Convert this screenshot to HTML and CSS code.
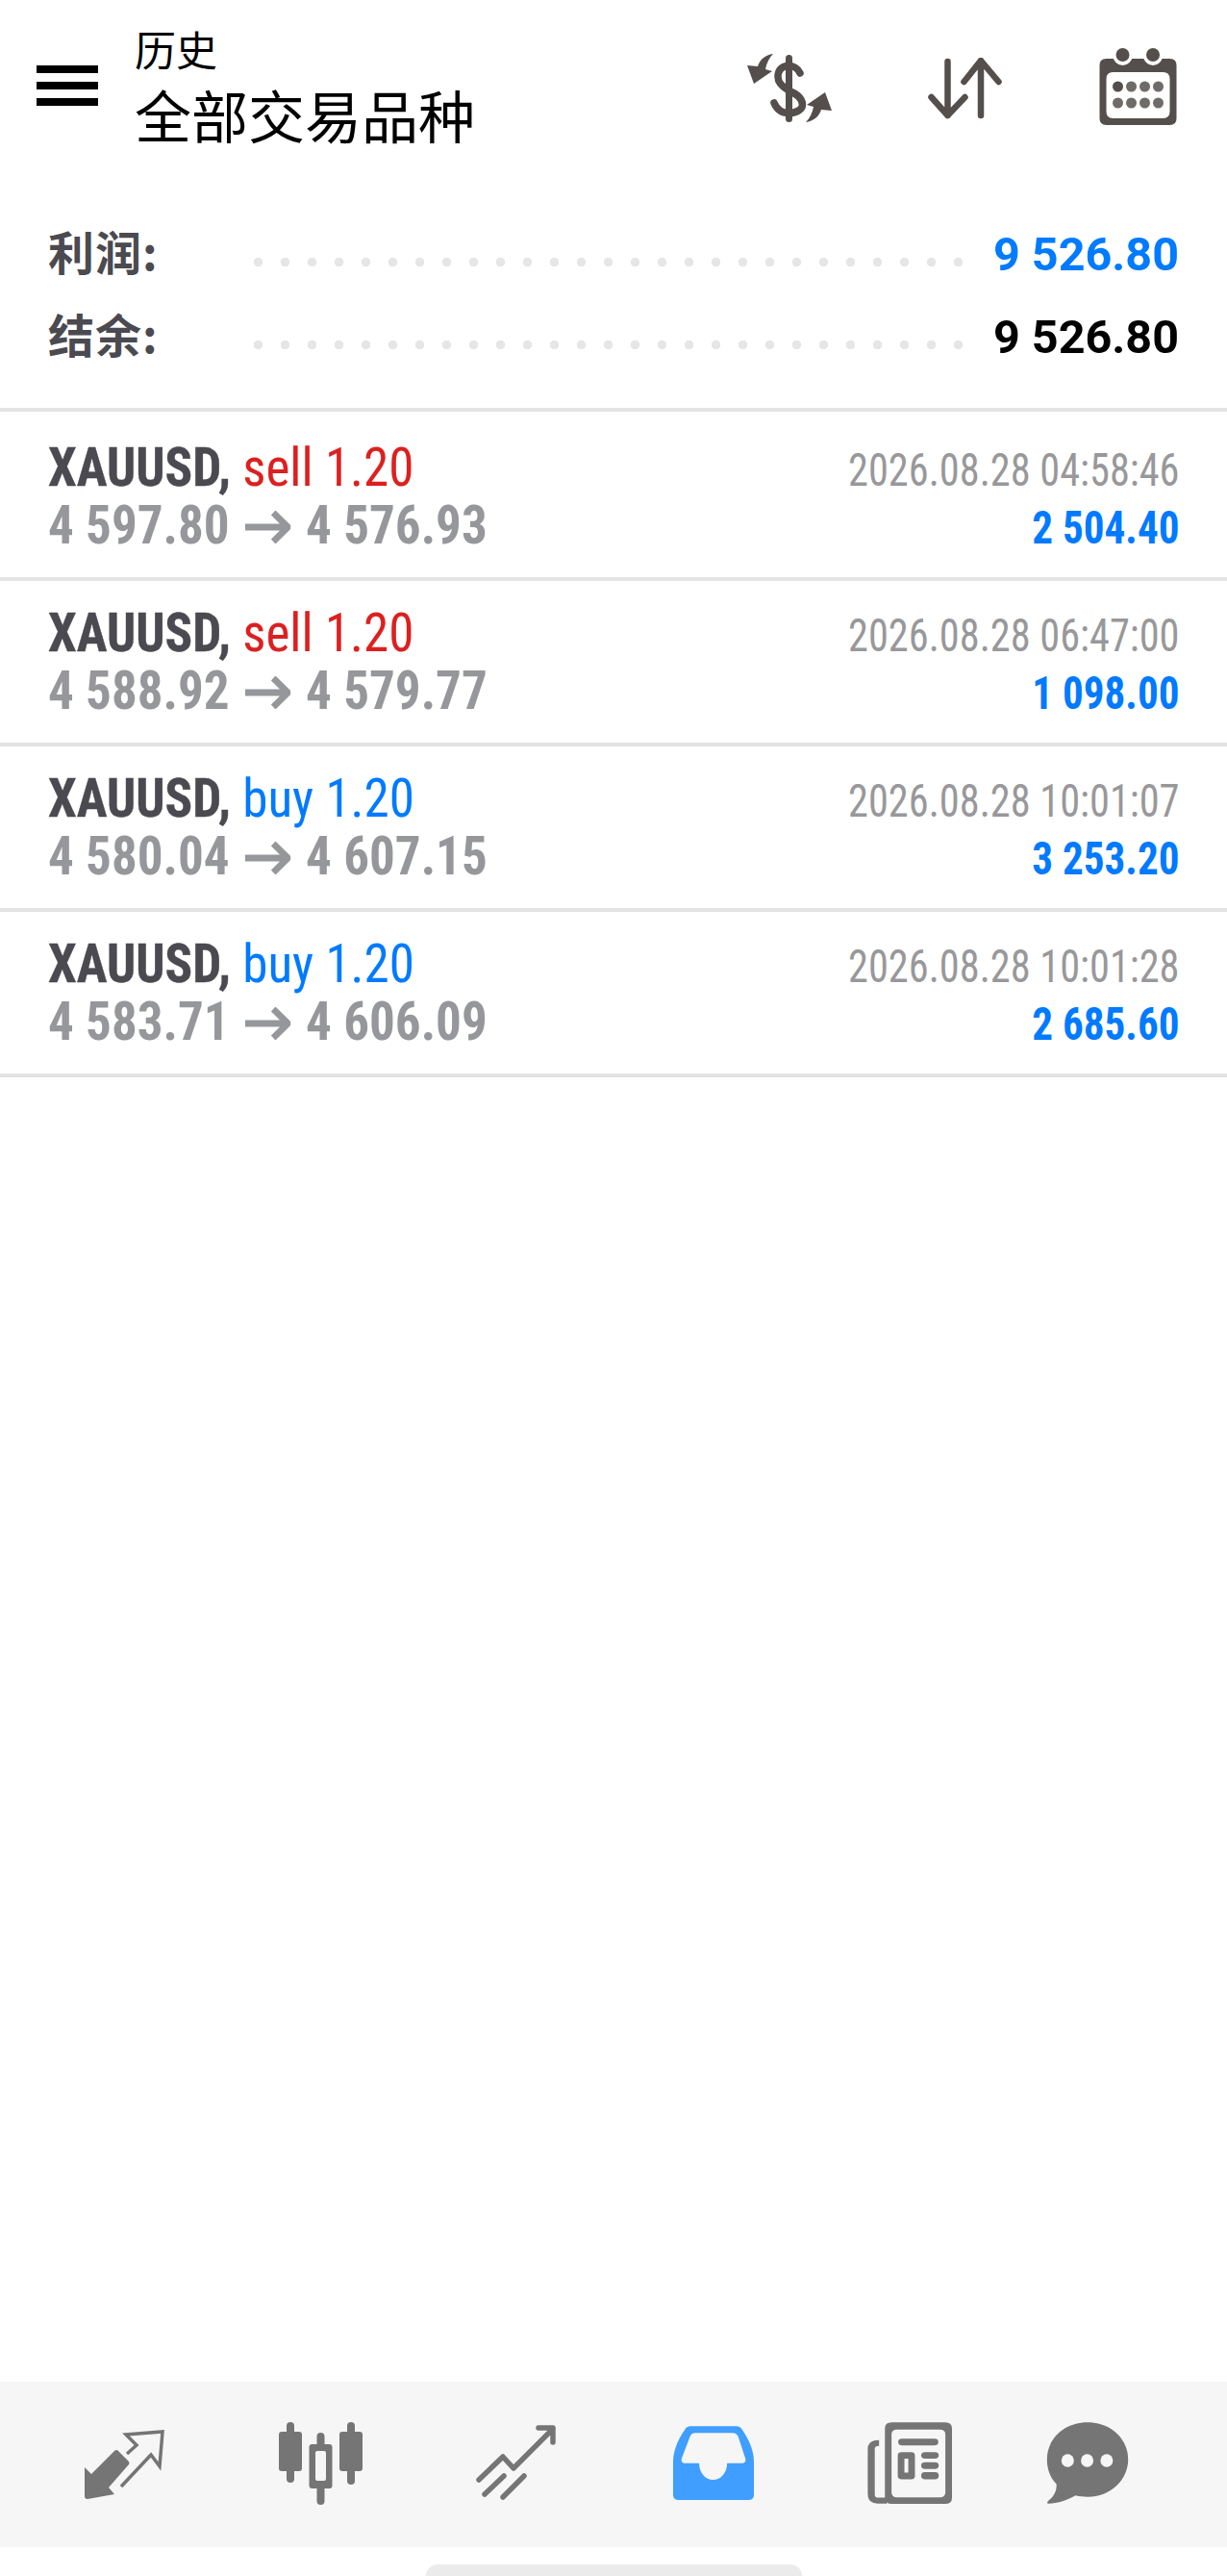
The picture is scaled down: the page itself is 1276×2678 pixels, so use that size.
FILE: index.html
```html
<!DOCTYPE html>
<html lang="zh">
<head>
<meta charset="UTF-8" />
<meta name="viewport" content="width=device-width, initial-scale=1" />
<title>历史</title>
<link rel="stylesheet" href="styles.css">
</head>
<body>

<div class="page">

  <header class="topbar">
    <div class="burger"><span></span><span></span><span></span></div>
    <div class="titles">
      <div class="title-small">历史</div>
      <div class="title-big">全部交易品种</div>
    </div>
    <!-- dollar swap -->
    <svg class="ico-dollar" viewBox="0 0 100 90">
      <path d="M34 11C26 12 20 17 18 24L7 23L14 42L33 29L26 27C27 21 30 15 34 11Z" fill="#544e4c"/>
      <path d="M68 82C76 81 82 76 84 69L95 70L88 51L69 64L76 66C75 72 72 78 68 82Z" fill="#544e4c"/>
      <path d="M62 31C60 26 55 23.500 50 23.500C42 23.500 39 29 39 35C39 42 45 46 50 49C57 52 64.500 56 64.500 64C64.500 69 58 72.500 50 72.500C43 72.500 38 69 35 62" fill="none" stroke="#544e4c" stroke-width="7.500" stroke-linecap="round"/>
      <rect x="47" y="12" width="7" height="70" rx="3.500" fill="#544e4c"/>
    </svg>
    <!-- sort -->
    <svg class="ico-sort" viewBox="0 0 77 64">
      <path d="M20.500 4V60M3.500 41L20.500 60L38.500 41M55 60V3M37.500 25L55 3L73.500 25" fill="none" stroke="#544e4c" stroke-width="6.500" stroke-linecap="round" stroke-linejoin="round"/>
    </svg>
    <!-- calendar -->
    <svg class="ico-calendar" viewBox="0 0 80 80">
      <path fill-rule="evenodd" d="M7 11H73Q80 11 80 18V73Q80 80 73 80H7Q0 80 0 73V18Q0 11 7 11ZM14 25Q7 25 7 32V66Q7 73 14 73H66Q73 73 73 66V32Q73 25 66 25Z" fill="#544e4c"/>
      <circle cx="24" cy="8" r="10" fill="#fff"/>
      <circle cx="55.500" cy="8" r="10" fill="#fff"/>
      <circle cx="24" cy="7" r="7" fill="#544e4c"/>
      <circle cx="55.500" cy="7" r="7" fill="#544e4c"/>
      <g fill="#6f6b69">
        <circle cx="19" cy="40" r="5.500" fill="#544e4c"/><circle cx="33" cy="40" r="5.500"/><circle cx="47" cy="40" r="5.500"/><circle cx="61" cy="40" r="5.500"/>
        <circle cx="19" cy="57" r="5.500"/><circle cx="33" cy="57" r="5.500"/><circle cx="47" cy="57" r="5.500"/><circle cx="61" cy="57" r="5.500"/>
      </g>
    </svg>
  </header>

  <section class="summary">
    <div class="sum-row">
      <span class="sum-label">利润:</span>
      <span class="dots"></span>
      <span class="sum-value blue">9 526.80</span>
    </div>
    <div class="sum-row">
      <span class="sum-label">结余:</span>
      <span class="dots"></span>
      <span class="sum-value">9 526.80</span>
    </div>
  </section>

  <main class="deals">
    <div class="deal">
      <div class="deal-left">
        <div class="deal-head"><b>XAUUSD,</b> <span class="red">sell 1.20</span></div>
        <div class="deal-price">4 597.80 <svg class="to" viewBox="0 0 50 34"><path d="M0 17H46M31 2L47 17L31 32" fill="none" stroke="#96979a" stroke-width="7"/></svg> 4 576.93</div>
      </div>
      <div class="deal-right">
        <div class="deal-time">2026.08.28 04:58:46</div>
        <div class="deal-profit">2 504.40</div>
      </div>
    </div>
    <div class="deal">
      <div class="deal-left">
        <div class="deal-head"><b>XAUUSD,</b> <span class="red">sell 1.20</span></div>
        <div class="deal-price">4 588.92 <svg class="to" viewBox="0 0 50 34"><path d="M0 17H46M31 2L47 17L31 32" fill="none" stroke="#96979a" stroke-width="7"/></svg> 4 579.77</div>
      </div>
      <div class="deal-right">
        <div class="deal-time">2026.08.28 06:47:00</div>
        <div class="deal-profit">1 098.00</div>
      </div>
    </div>
    <div class="deal">
      <div class="deal-left">
        <div class="deal-head"><b>XAUUSD,</b> <span class="blue">buy 1.20</span></div>
        <div class="deal-price">4 580.04 <svg class="to" viewBox="0 0 50 34"><path d="M0 17H46M31 2L47 17L31 32" fill="none" stroke="#96979a" stroke-width="7"/></svg> 4 607.15</div>
      </div>
      <div class="deal-right">
        <div class="deal-time">2026.08.28 10:01:07</div>
        <div class="deal-profit">3 253.20</div>
      </div>
    </div>
    <div class="deal">
      <div class="deal-left">
        <div class="deal-head"><b>XAUUSD,</b> <span class="blue">buy 1.20</span></div>
        <div class="deal-price">4 583.71 <svg class="to" viewBox="0 0 50 34"><path d="M0 17H46M31 2L47 17L31 32" fill="none" stroke="#96979a" stroke-width="7"/></svg> 4 606.09</div>
      </div>
      <div class="deal-right">
        <div class="deal-time">2026.08.28 10:01:28</div>
        <div class="deal-profit">2 685.60</div>
      </div>
    </div>
  </main>

  <nav class="tabs">
    <div class="tab">
      <svg class="ico-tab" viewBox="0 0 100 90">
        <path d="M8 50L15 57L39 33Q41 31 43 33L54 44Q55 46 54 47L33 71L39 78L11 83Q8 83 8 80Z" fill="#757575"/>
        <path d="M46 70L77 37L86 49L89 13L51 16L62 27L52 36" fill="none" stroke="#757575" stroke-width="3.500"/>
      </svg>
    </div>
    <div class="tab">
      <svg class="ico-tab" viewBox="0 0 100 90">
        <g fill="#757575">
          <rect x="14" y="3" width="8" height="63" rx="4"/>
          <rect x="6" y="13" width="24" height="41" rx="3"/>
          <rect x="45.500" y="14" width="8" height="75" rx="4"/>
          <rect x="37.500" y="26" width="24" height="46" rx="3"/>
          <rect x="77" y="3" width="8" height="65" rx="4"/>
          <rect x="69" y="13" width="24" height="41" rx="3"/>
        </g>
        <rect x="44" y="33" width="11" height="31" rx="2" fill="#f6f6f6"/>
      </svg>
    </div>
    <div class="tab">
      <svg class="ico-tab ico-trend" viewBox="0 0 100 90">
        <path d="M13 63L38 39L49 51L90 10M75 9H90V24M19 78L39 59M38 81L60 59" fill="none" stroke="#757575" stroke-width="5.500" stroke-linecap="round" stroke-linejoin="round"/>
      </svg>
    </div>
    <div class="tab">
      <svg class="ico-inbox" viewBox="145 183 208 232" preserveAspectRatio="none">
        <path fill-rule="evenodd" d="M190 184H308Q318 184 323 195C340 225 353 260 353 295V400Q353 415 338 415H160Q145 415 145 400V295C145 260 158 225 175 195Q180 184 190 184ZM203 205Q191 205 188 218L167 285Q164 300 178 300H212C212 330 228 352 248 352C268 352 284 330 284 300H320Q334 300 331 285L313 218Q309 205 297 205Z" fill="#3f9eff"/>
      </svg>
    </div>
    <div class="tab">
      <svg class="ico-news" viewBox="645 172 217 253" preserveAspectRatio="none">
        <path fill-rule="evenodd" d="M708 173H844Q862 173 862 191V407Q862 425 844 425H708Q690 425 690 407V191Q690 173 708 173ZM722 195Q707 195 707 210V390Q707 405 722 405H830Q845 405 845 390V210Q845 195 830 195Z" fill="#757575"/>
        <path d="M675 237Q655 237 655 255V396Q655 415 672 415H695" fill="none" stroke="#757575" stroke-width="18"/>
        <rect x="724" y="223" width="103" height="21" rx="10" fill="#757575"/>
        <path fill-rule="evenodd" d="M733 265H757Q767 265 767 275V339Q767 349 757 349H733Q723 349 723 339V275Q723 265 733 265ZM740 285V328H750V285Z" fill="#757575"/>
        <rect x="783" y="265" width="45" height="20" rx="10" fill="#757575"/>
        <rect x="783" y="296" width="45" height="21" rx="10" fill="#757575"/>
        <rect x="783" y="327" width="45" height="22" rx="10" fill="#757575"/>
      </svg>
    </div>
    <div class="tab tab-last">
      <svg class="ico-chat" viewBox="1105 172 212 255" preserveAspectRatio="none">
        <path d="M1211 173C1270 173 1315 224 1315 288C1315 352 1270 405 1211 405C1200 405 1190 404 1180 401C1160 415 1135 426 1110 426Q1105 424 1110 418C1125 405 1133 385 1131 365C1115 345 1107 318 1107 288C1107 224 1152 173 1211 173Z" fill="#757575"/>
        <g fill="#f6f6f6">
          <ellipse cx="1160" cy="292" rx="16" ry="20"/>
          <ellipse cx="1210" cy="292" rx="16" ry="20"/>
          <ellipse cx="1260" cy="292" rx="16" ry="20"/>
        </g>
      </svg>
    </div>
  </nav>

  <div class="home-area"><div class="home-pill"></div></div>

</div>

</body>
</html>
```
FILE: styles.css
```css
html, body {
  margin: 0;
  height: 100%;
  background: #fff;
  overflow: hidden;
}

.page {
  height: 2678px;
  display: flex;
  flex-direction: column;
  font-family: "Roboto Condensed", Roboto, sans-serif;
}

/* top bar */
.topbar {
  height: 180px;
  display: flex;
  align-items: center;
  padding-left: 38px;
  padding-right: 52px;
}

.burger {
  width: 64px;
  margin-right: 38px;
  display: flex;
  flex-direction: column;
  gap: 9px;
  margin-top: -2px;
}

.burger span {
  height: 8px;
  background: #000;
}

.titles {
  flex: 1;
  font-family: "Noto Sans CJK SC", sans-serif;
  color: #000;
}

.title-small {
  font-size: 43px;
  line-height: 58px;
  margin-top: -6px;
  margin-bottom: 6px;
}

.title-big {
  font-size: 59px;
  line-height: 68px;
}

.ico-dollar {
  width: 100px;
  height: 90px;
  margin-right: 95px;
}

.ico-sort {
  width: 77px;
  height: 64px;
  margin-right: 101px;
  margin-top: 4px;
}

.ico-calendar {
  width: 81px;
  height: 80px;
}

/* profit / balance */
.summary {
  padding: 42px 50px 30px;
  border-bottom: 4px solid #e3e3e3;
}

.sum-row {
  height: 86px;
  display: flex;
  align-items: center;
}

.sum-label {
  width: 214px;
  font-family: "Noto Sans CJK SC", sans-serif;
  font-size: 48px;
  font-weight: 700;
  letter-spacing: 1px;
  color: #4a4a50;
  margin-top: -11px;
}

.dots {
  width: 737px;
  height: 9px;
  margin-top: 15px;
  background: radial-gradient(circle at 4.5px 4.5px, #e6e6e8 4.5px, transparent 5px) 0 0 / 28px 9px repeat-x;
}

.sum-value {
  margin-left: auto;
  margin-top: -2px;
  font-family: Roboto, sans-serif;
  font-size: 48.5px;
  font-weight: 700;
  color: #000;
}

.blue { color: #007aff !important; }
.red { color: #dc2020; }

/* deals list */
.deals {
  flex: 1;
  padding-top: 4px;
}

.deal {
  height: 120px;
  padding: 24px 50px;
  display: flex;
  justify-content: space-between;
  border-bottom: 4px solid #e3e3e3;
}

/* the app's condensed face is a bit narrower than Roboto Condensed */
.deal-left {
  font-size: 56px;
  line-height: 60px;
  transform: scaleX(0.948);
  transform-origin: left center;
}

.deal-head {
  font-weight: 400;
  white-space: nowrap;
}

.deal-head b {
  font-weight: 700;
  color: #4a4a50;
  -webkit-text-stroke: 0.4px #4a4a50;
}

.deal-price {
  font-weight: 700;
  color: #96979a;
  white-space: nowrap;
}

.to {
  width: 50px;
  height: 34px;
  margin: 0 4px;
  vertical-align: 0;
}

.deal-right {
  font-size: 48px;
  line-height: 60px;
  text-align: right;
  padding-top: 3px;
}

.deal-time {
  color: #98989a;
  white-space: nowrap;
  transform: scaleX(0.882);
  transform-origin: right center;
}

.deal-profit {
  font-weight: 700;
  color: #007aff;
  transform: scaleX(0.898);
  transform-origin: right center;
}

/* bottom nav */
.tabs {
  height: 168px;
  padding-bottom: 4px;
  padding-left: 28px;
  display: grid;
  grid-template-columns: repeat(6, 204px);
  background: #f6f6f6;
}

.tab {
  display: flex;
  align-items: center;
  justify-content: center;
}

.tab-last {
  margin-right: 38px;
}

.ico-tab {
  width: 100px;
  height: 90px;
}

.ico-trend {
  margin-right: 6px;
}

.ico-inbox {
  width: 84px;
  height: 77px;
}

.ico-news {
  width: 88px;
  height: 85px;
}

.ico-chat {
  width: 86px;
  height: 85px;
}

.home-area {
  height: 30px;
  display: flex;
  align-items: flex-end;
  justify-content: center;
}

.home-pill {
  width: 391px;
  height: 12px;
  background: #ebebeb;
  border-radius: 12px 12px 0 0;
}
```
